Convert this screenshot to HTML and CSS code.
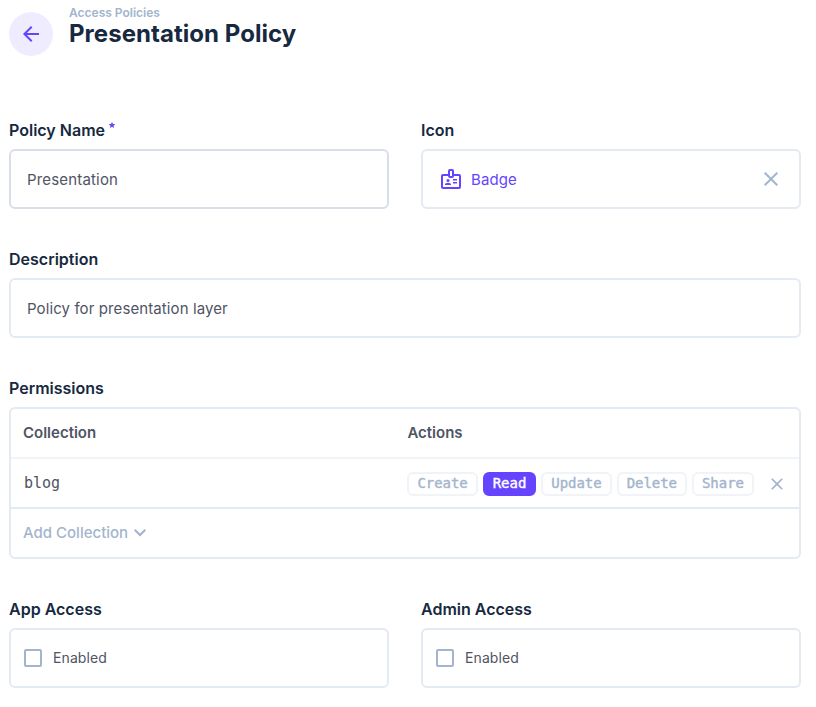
FILE: index.html
```html
<!DOCTYPE html>
<html lang="en">
<head>
<meta charset="utf-8">
<title>Presentation Policy</title>
<link rel="stylesheet" href="styles.css">
</head>
<body>
<header class="header">
  <button class="back" aria-label="Back">
    <svg width="24" height="24" viewBox="0 0 24 24"><path d="m12 20-8-8 8-8 1.43 1.4L7.83 11H20v2H7.83l5.6 5.6z"/></svg>
  </button>
  <div class="titles">
    <div class="crumb">Access Policies</div>
    <h1 class="title">Presentation Policy</h1>
  </div>
</header>
<main class="form">
  <section class="field">
    <div class="label">Policy Name<svg class="required" width="8" height="8" viewBox="0 0 24 24"><path d="M12 17.27 18.18 21l-1.64-7.03L22 9.24l-7.19-.61L12 2 9.19 8.63 2 9.24l5.46 4.73L5.82 21z"/></svg></div>
    <div class="input hovered"><span class="value">Presentation</span></div>
  </section>
  <section class="field">
    <div class="label">Icon</div>
    <div class="input icon-input">
      <svg class="badge" width="24" height="24" viewBox="0 0 24 24"><path fill-rule="evenodd" d="M20 7h-5V4a2 2 0 0 0-2-2h-2a2 2 0 0 0-2 2v3H4a2 2 0 0 0-2 2v11a2 2 0 0 0 2 2h16a2 2 0 0 0 2-2V9a2 2 0 0 0-2-2zM11 4h2v5h-2zM20 20H4V9h5a2 2 0 0 0 2 2h2a2 2 0 0 0 2-2h5z"/><circle cx="9" cy="13.5" r="1.5"/><path d="M11.08 16.18a5.2 5.2 0 0 0-4.16 0A1.5 1.5 0 0 0 6 17.57V18h6v-.43a1.5 1.5 0 0 0-.92-1.39zM14 12h4v1.5h-4zM14 15h4v1.5h-4z"/></svg>
      <span class="value">Badge</span>
      <svg class="clear" width="24" height="24" viewBox="0 0 24 24"><path d="M6.4 19 5 17.6l5.6-5.6L5 6.4 6.4 5l5.6 5.6L17.6 5 19 6.4 13.4 12l5.6 5.6-1.4 1.4-5.6-5.6z"/></svg>
    </div>
  </section>
  <section class="field full">
    <div class="label">Description</div>
    <div class="input"><span class="value">Policy for presentation layer</span></div>
  </section>
  <section class="field full">
    <div class="label">Permissions</div>
    <div class="table">
      <div class="row head"><span class="collection">Collection</span><span>Actions</span></div>
      <div class="row item">
        <span class="collection mono">blog</span>
        <div class="actions">
          <span class="chip">Create</span><span class="chip active">Read</span><span class="chip">Update</span><span class="chip">Delete</span><span class="chip">Share</span>
        </div>
        <svg class="remove" width="20" height="20" viewBox="0 0 24 24"><path d="M6.4 19 5 17.6l5.6-5.6L5 6.4 6.4 5l5.6 5.6L17.6 5 19 6.4 13.4 12l5.6 5.6-1.4 1.4-5.6-5.6z"/></svg>
      </div>
      <div class="row add"><span>Add Collection</span><svg width="24" height="24" viewBox="0 0 24 24"><path d="m12 15.4-6-6L7.4 8l4.6 4.6L16.6 8 18 9.4z"/></svg></div>
    </div>
  </section>
  <section class="field">
    <div class="label">App Access</div>
    <div class="input check"><span class="box"></span>Enabled</div>
  </section>
  <section class="field">
    <div class="label">Admin Access</div>
    <div class="input check"><span class="box"></span>Enabled</div>
  </section>
</main>
</body>
</html>
```
FILE: styles.css
```css
* { box-sizing: border-box; }
body {
  margin: 0;
  padding: 0 15px 0 9px;
  background: #fff;
  color: #4f5464;
  font: 500 15px/24px Inter, sans-serif;
}
svg { display: block; flex: none; fill: currentColor; }
.header { display: flex; height: 117px; padding-top: 5px; }
.back {
  width: 44px;
  height: 44px;
  margin: 7px 16px 0 0;
  padding: 0;
  border: 0;
  border-radius: 50%;
  display: grid;
  place-items: center;
  background: #f0ecff;
  color: #6644ff;
}
.crumb { color: #a2b5cd; font-size: 12px; line-height: 16px; font-weight: 600; }
.title { margin: -2px 0 0; color: #172940; font-size: 24px; line-height: 30px; font-weight: 700; letter-spacing: 0.05px; }
.form { display: grid; grid-template-columns: 1fr 1fr; gap: 37px 32px; }
.full { grid-column: 1 / -1; }
.label {
  display: flex;
  height: 24px;
  margin-bottom: 8px;
  padding-top: 1px;
  color: #172940;
  font-size: 16px;
  font-weight: 600;
}
.required { margin: 3px 0 0 3px; color: #6644ff; }
.input {
  display: flex;
  align-items: center;
  height: 60px;
  padding: 0 16px;
  border: 2px solid #e4eaf1;
  border-radius: 6px;
  font-weight: 400;
}
.value { padding-top: 2px; letter-spacing: 0.1px; }
.hovered { border-color: #d8dfe9; }
.hovered .value { letter-spacing: 0.17px; }
.icon-input { color: #6644ff; }
.badge { margin-right: 8px; }
.clear { margin-left: auto; color: #a2b5cd; }
.table { height: 152px; border: 2px solid #e4eaf1; border-radius: 6px; }
.row { display: flex; align-items: center; padding-left: 12px; }
.head { height: 50px; border-bottom: 2px solid #f0f4f9; font-weight: 600; }
.item { height: 50px; padding-top: 2px; border-bottom: 2px solid #e4eaf1; }
.add { height: 48px; color: #a2b5cd; font-weight: 500; }
.collection { width: 384.4px; }
.mono { font-family: "DejaVu Sans Mono", monospace; font-size: 15px; font-weight: 400; padding: 0 0 2px 1px; }
.actions { display: flex; gap: 5px; }
.chip {
  height: 24px;
  padding: 0 8px;
  border: 2px solid #f0f4f9;
  border-radius: 6px;
  color: #a2b5cd;
  font: 400 14px/19px "DejaVu Sans Mono", monospace;
  letter-spacing: -0.04px;
  -webkit-text-stroke: 0.4px currentColor;
}
.active { border-color: #6644ff; background: #6644ff; color: #fff; }
.remove { margin: 0 12px 0 auto; color: #a2b5cd; }
.check { padding: 0 13px; font-size: 14px; letter-spacing: 0.1px; }
.box { width: 18px; height: 18px; margin-right: 11px; border: 2px solid #a2b5cd; border-radius: 2px; }
```
